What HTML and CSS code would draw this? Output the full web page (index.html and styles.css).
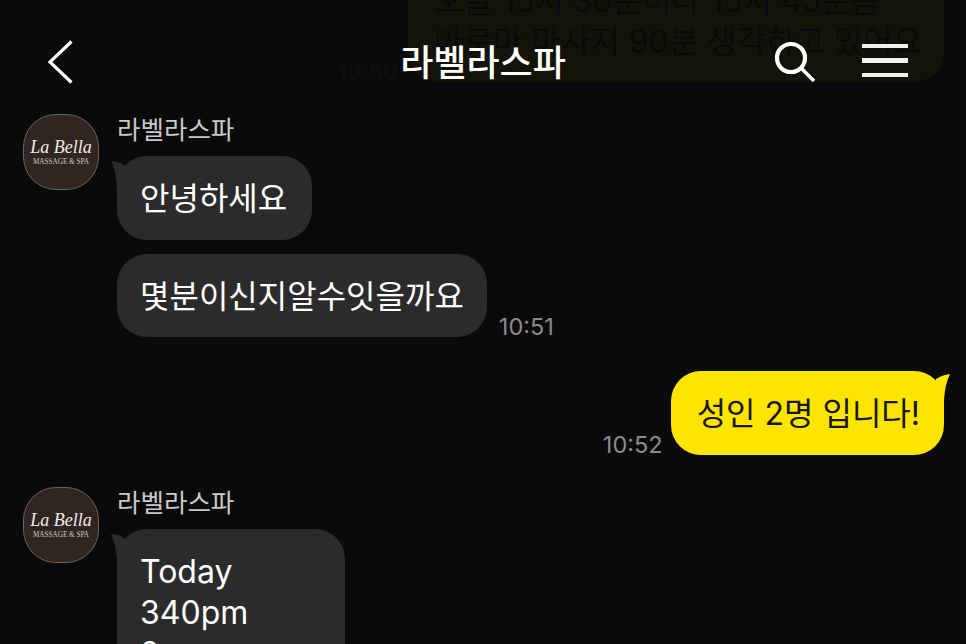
FILE: index.html
```html
<!DOCTYPE html>
<html lang="ko">
<head>
  <meta charset="UTF-8">
  <meta name="viewport" content="width=device-width, initial-scale=1.0">
  <title>라벨라스파</title>
  <link rel="stylesheet" href="styles.css">
</head>
<body>

  <!-- Top bar, lies over the messages scrolling under it -->
  <header class="topbar">
    <svg class="icon-back" width="28" height="44" viewBox="0 0 28 44">
      <path d="M24.5 1.5 L3 22 L24.5 42.5" fill="none" stroke="#fff" stroke-width="3.2"/>
    </svg>
    <h1 class="topbar-title">라벨라스파</h1>
    <svg class="icon-search" width="42" height="42" viewBox="0 0 42 42">
      <circle cx="17" cy="17" r="14" fill="none" stroke="#fff" stroke-width="4.2"/>
      <path d="M27 27 L40 40" fill="none" stroke="#fff" stroke-width="3.6"/>
    </svg>
    <div class="icon-menu"><span></span><span></span><span></span></div>
  </header>

  <main class="chat">
    <div class="row row-me row-first">
      <span class="time">10:50</span>
      <div class="bubble bubble-me bubble-old">오늘 15시 30분이나 15시 45분쯤<br>아로마 마사지 90분 생각하고 있어요</div>
    </div>

    <div class="row-them">
      <div class="avatar">
        <span class="avatar-script">La Bella</span>
        <span class="avatar-sub">MASSAGE &amp; SPA</span>
      </div>
      <div class="them-body">
        <div class="name">라벨라스파</div>
        <div class="bubble bubble-them has-tail">안녕하세요</div>
        <div class="row row-time">
          <div class="bubble bubble-them">몇분이신지알수잇을까요</div>
          <span class="time">10:51</span>
        </div>
      </div>
    </div>

    <div class="row row-me row-reply">
      <span class="time">10:52</span>
      <div class="bubble bubble-me has-tail-right">성인 2명 입니다!</div>
    </div>

    <div class="row-them">
      <div class="avatar">
        <span class="avatar-script">La Bella</span>
        <span class="avatar-sub">MASSAGE &amp; SPA</span>
      </div>
      <div class="them-body">
        <div class="name">라벨라스파</div>
        <div class="bubble bubble-them has-tail bubble-tall">Today<br>340pm<br>2</div>
      </div>
    </div>
  </main>

</body>
</html>
```

FILE: styles.css
```css
html, body {
  margin: 0;
  padding: 0;
  height: 100%;
}

body {
  width: 966px;
  height: 644px;
  overflow: hidden;
  position: relative;
  background-color: #0a0a0a;
  color: #fff;
  font-family: Inter, "Noto Sans CJK KR", sans-serif;
}

.topbar {
  position: absolute;
  z-index: 2;
  top: 0;
  left: 0;
  width: 966px;
  height: 100px;
  background-color: rgba(10, 10, 10, 0.96);
}

.topbar-title {
  position: absolute;
  top: 40px;
  left: 0;
  width: 966px;
  margin: 0;
  text-align: center;
  font-size: 36px;
  line-height: 46px;
  font-weight: 500;
}

.icon-back {
  position: absolute;
  left: 47px;
  top: 40px;
}

.icon-search {
  position: absolute;
  left: 774px;
  top: 41px;
}

.icon-menu {
  position: absolute;
  left: 862px;
  top: 44px;
  width: 46px;
  display: flex;
  flex-direction: column;
  gap: 10px;
}

.icon-menu span {
  display: block;
  height: 4.4px;
  background-color: #f2f2f2;
}

.chat {
  display: flex;
  flex-direction: column;
  margin-top: -42px;
  padding: 0 22px 0 23px;
}

.row {
  display: flex;
  align-items: flex-end;
  gap: 8px;
}

.row-me {
  justify-content: flex-end;
}

.row-first {
  gap: 10px;
}

.row-time {
  gap: 12px;
}

.row-reply {
  margin-top: 34px;
}

.row-them {
  display: flex;
  gap: 18px;
  margin-top: 32px;
}

.avatar {
  flex: none;
  width: 76px;
  height: 76px;
  box-sizing: border-box;
  border: 1px solid #6b6156;
  border-radius: 33px;
  background-color: #2f2622;
  display: flex;
  flex-direction: column;
  align-items: center;
  justify-content: center;
  gap: 2px;
}

.avatar-script {
  font-family: "Liberation Serif", serif;
  font-style: italic;
  font-size: 18px;
  line-height: 18px;
  color: #f1ece4;
}

.avatar-sub {
  font-family: "Liberation Serif", serif;
  font-size: 7.2px;
  line-height: 9px;
  color: #cfc9bf;
  white-space: nowrap;
}

.them-body {
  display: flex;
  flex-direction: column;
  align-items: flex-start;
}

.name {
  font-size: 25.5px;
  line-height: 30px;
  color: #c9c9c9;
  padding-top: 1px;
  margin-bottom: 11px;
}

.bubble {
  position: relative;
  box-sizing: border-box;
  padding: 22px 25px 20px 23px;
  border-radius: 30px;
  font-size: 32px;
  line-height: 42px;
  white-space: nowrap;
}

.bubble-them {
  background-color: #2b2b2b;
  color: #fff;
}

.row-time .bubble {
  padding-right: 23px;
  padding-bottom: 19px;
}

.has-tail {
  margin-bottom: 14px;
}

.bubble-tall {
  width: 228px;
  margin-bottom: 0;
  line-height: 41px;
}

.bubble-me {
  background-color: #fee500;
  color: #17170c;
  padding-left: 26px;
  padding-right: 24px;
}

.bubble-old {
  width: 536px;
  line-height: 41px;
}

.has-tail::before {
  content: "";
  position: absolute;
  left: -6px;
  top: 5px;
  width: 16px;
  height: 26px;
  background-color: #2b2b2b;
  clip-path: path("M0 0 Q8 0 14 5 L14 26 L6 26 Q5 10 0 0 Z");
}

.has-tail-right::after {
  content: "";
  position: absolute;
  right: -6px;
  top: 3px;
  width: 16px;
  height: 26px;
  background-color: #fee500;
  clip-path: path("M16 0 Q8 1 2 5 L2 26 L10 26 Q11 10 16 0 Z");
}

.time {
  font-size: 23.5px;
  line-height: 20px;
  color: #8a8a8a;
}
```
